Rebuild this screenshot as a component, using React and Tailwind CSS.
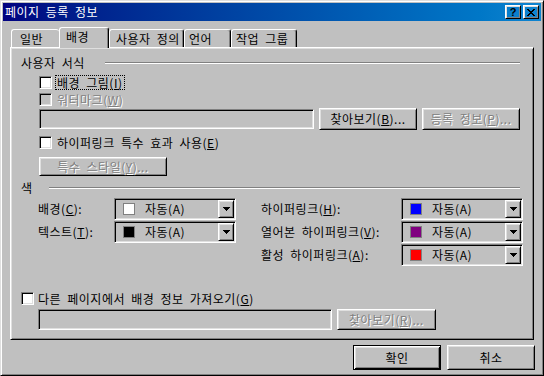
import React from 'react';

const FONT = "font-['Noto_Sans_CJK_KR','Noto_Sans',sans-serif]";
const raised = 'border border-t-white border-l-white border-b-black border-r-black shadow-[inset_1px_1px_0_#dfdfdf,inset_-1px_-1px_0_#808080]';
const sunken = 'border border-t-[#808080] border-l-[#808080] border-b-white border-r-white shadow-[inset_1px_1px_0_#000,inset_-1px_-1px_0_#dfdfdf]';
const grayText = 'text-[#808080] [text-shadow:1px_1px_0_#fff]';

const Check = ({ disabled }) => (
  <span className={`block shrink-0 w-[13px] h-[13px] ${sunken} ${disabled ? 'bg-[#c0c0c0]' : 'bg-white'}`} />
);

const Button = ({ children, disabled, className = '' }) => (
  <div className={`flex items-center justify-center shrink-0 ${raised} ${disabled ? grayText : ''} ${className}`}>{children}</div>
);

const Field = ({ className = '' }) => <div className={`shrink-0 bg-[#c0c0c0] ${sunken} ${className}`} />;

const Arrow = () => (
  <svg width="7" height="4" viewBox="0 0 7 4" shapeRendering="crispEdges">
    <path d="M0 0h7v1H0zM1 1h5v1H1zM2 2h3v1H2zM3 3h1v1H3z" fill="#000" />
  </svg>
);

const Combo = ({ color }) => (
  <div className={`w-[122px] h-[22px] shrink-0 flex items-center p-px ${sunken}`}>
    <span className={`ml-[7px] w-[12px] h-[12px] border border-[#808080] ${color}`} />
    <span className="ml-[10px] flex-1">자동(A)</span>
    <div className={`w-[16px] h-full flex items-center justify-center ${raised}`}>
      <Arrow />
    </div>
  </div>
);

const Tab = ({ children, className = '' }) => (
  <div className={`h-[18px] flex items-center border-t border-l border-t-white border-l-white rounded-t-[3px] ${className}`}>
    {children}
  </div>
);

export default function App() {
  return (
    <div className={`w-[544px] h-[376px] bg-[#c0c0c0] text-black text-[12px] leading-[14px] tracking-[0.5px] [word-spacing:3px] ${FONT} border border-t-[#dfdfdf] border-l-[#dfdfdf] border-b-black border-r-black shadow-[inset_1px_1px_0_#fff,inset_-1px_-1px_0_#808080] p-[2px] flex flex-col`}>
      {/* title bar */}
      <div className="h-[18px] shrink-0 flex items-center pl-[2px] pr-[2px] bg-linear-to-r from-[#000080] to-[#1084d0]">
        <span className="text-white flex-1">페이지 등록 정보</span>
        <div className={`w-[16px] h-[14px] flex items-center justify-center ${raised} font-['Liberation_Sans',sans-serif] font-bold text-[11px] leading-none tracking-normal`}>?</div>
        <div className={`ml-[2px] w-[16px] h-[14px] flex items-center justify-center ${raised}`}>
          <svg width="8" height="7" viewBox="0 0 8 7" shapeRendering="crispEdges">
            <path d="M0 0h2v1H0zM6 0h2v1H6zM1 1h2v1H1zM5 1h2v1H5zM2 2h4v1H2zM3 3h2v1H3zM2 4h4v1H2zM1 5h2v1H1zM5 5h2v1H5zM0 6h2v1H0zM6 6h2v1H6z" fill="#000" />
          </svg>
        </div>
      </div>

      {/* body */}
      <div className="mt-[6px] pl-[7px]">
        {/* tabs */}
        <div className="h-[20px] flex items-end pl-px">
          <Tab className="w-[48px] pl-[8px]">일반</Tab>
          <div className={`relative z-10 w-[50px] h-[21px] -mb-px pl-[6px] flex items-center pb-[2px] bg-[#c0c0c0] border-t border-l border-r border-t-white border-l-white border-r-black shadow-[inset_-1px_0_0_#808080] rounded-t-[3px]`}>배경</div>
          <Tab className="w-[75px] pl-[6px] border-r border-r-black shadow-[inset_-1px_0_0_#808080]">사용자 정의</Tab>
          <Tab className="w-[47px] pl-[4px] border-r border-r-black shadow-[inset_-1px_0_0_#808080]">언어</Tab>
          <Tab className="w-[66px] pl-[4px] border-r border-r-black shadow-[inset_-1px_0_0_#808080]">작업 그룹</Tab>
        </div>

        {/* panel */}
        <div className="w-[524px] h-[293px] flex flex-col border border-t-white border-l-white border-b-black border-r-black shadow-[inset_1px_1px_0_#dfdfdf,inset_-1px_-1px_0_#808080]">
          <div className="mt-[7px] h-[16px] flex items-center pl-[10px]">
            <span className="w-[84px]">사용자 서식</span>
            <span className="w-[415px] h-[2px] border-t border-t-[#808080] border-b border-b-white" />
          </div>

          <div className="mt-[4px] h-[15px] flex items-center pl-[28px]">
            <Check />
            <span className="ml-[3px] px-px border border-dotted border-black leading-[13px]">배경 그림(<u className="underline">I</u>)</span>
          </div>

          <div className="mt-[2px] h-[15px] flex items-center pl-[28px]">
            <Check disabled />
            <span className={`ml-[5px] ${grayText}`}>워터마크(<u className="underline">W</u>)</span>
          </div>

          <div className="mt-px h-[22px] flex items-center pl-[28px]">
            <Field className="w-[275px] h-[20px]" />
            <Button className="ml-[5px] w-[98px] h-[22px]">찾아보기(<u className="underline">B</u>)...</Button>
            <Button disabled className="ml-[5px] w-[98px] h-[22px]">등록 정보(<u className="underline">P</u>)...</Button>
          </div>

          <div className="mt-[5px] h-[15px] flex items-center pl-[28px]">
            <Check />
            <span className="ml-[5px]">하이퍼링크 특수 효과 사용(<u className="underline">E</u>)</span>
          </div>

          <div className="mt-[7px] h-[19px] flex pl-[28px]">
            <Button disabled className="w-[128px] h-[19px]">특수 스타일(<u className="underline">Y</u>)...</Button>
          </div>

          <div className="mt-[4px] h-[15px] flex items-center pl-[10px]">
            <span className="w-[28px]">색</span>
            <span className="w-[471px] h-[2px] border-t border-t-[#808080] border-b border-b-white" />
          </div>

          <div className="mt-[3px] flex pl-[27px]">
            <div className="flex flex-col gap-px">
              <div className="h-[22px] flex items-center">
                <span className="w-[76px]">배경(<u className="underline">C</u>):</span>
                <Combo color="bg-white" />
              </div>
              <div className="h-[22px] flex items-center">
                <span className="w-[76px]">텍스트(<u className="underline">T</u>):</span>
                <Combo color="bg-black" />
              </div>
            </div>
            <div className="ml-[25px] flex flex-col gap-px">
              <div className="h-[22px] flex items-center">
                <span className="w-[140px]">하이퍼링크(<u className="underline">H</u>):</span>
                <Combo color="bg-[#0000ff]" />
              </div>
              <div className="h-[22px] flex items-center">
                <span className="w-[140px]">열어본 하이퍼링크(<u className="underline">V</u>):</span>
                <Combo color="bg-[#800080]" />
              </div>
              <div className="h-[22px] flex items-center">
                <span className="w-[140px]">활성 하이퍼링크(<u className="underline">A</u>):</span>
                <Combo color="bg-[#ff0000]" />
              </div>
            </div>
          </div>

          <div className="mt-[25px] h-[15px] flex items-center pl-[10px]">
            <Check />
            <span className="ml-[4px]">다른 페이지에서 배경 정보 가져오기(<u className="underline">G</u>)</span>
          </div>

          <div className="mt-[3px] h-[22px] flex items-start pl-[27px]">
            <Field className="w-[294px] h-[21px]" />
            <Button disabled className="ml-[5px] w-[99px] h-[21px]">찾아보기(<u className="underline">R</u>)...</Button>
          </div>
        </div>
      </div>

      {/* buttons */}
      <div className="mt-[5px] flex justify-end gap-[6px] pr-[6px]">
        <div className="w-[88px] h-[25px] flex items-center justify-center border border-black shadow-[inset_1px_1px_0_#fff,inset_-1px_-1px_0_#000,inset_2px_2px_0_#dfdfdf,inset_-2px_-2px_0_#808080]">확인</div>
        <Button className="w-[88px] h-[25px]">취소</Button>
      </div>
    </div>
  );
}
